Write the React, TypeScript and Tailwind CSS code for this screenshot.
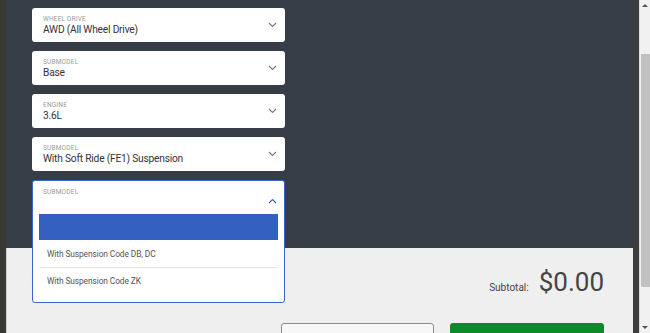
import React from 'react';

type Field = {
  label: string;
  value: string;
};

const fields: Field[] = [
  { label: 'Wheel Drive', value: 'AWD (All Wheel Drive)' },
  { label: 'Submodel', value: 'Base' },
  { label: 'Engine', value: '3.6L' },
  { label: 'Submodel', value: 'With Soft Ride (FE1) Suspension' },
];

const options = ['With Suspension Code DB, DC', 'With Suspension Code ZK'];

const Chevron: React.FC<{ up?: boolean }> = ({ up }) => (
  <svg width="9" height="6" viewBox="0 0 9 6" className={up ? 'text-[#3461c1]' : 'text-[#777]'}>
    <path
      d={up ? 'M1 5 L4.5 1.5 L8 5' : 'M1 1 L4.5 4.5 L8 1'}
      fill="none"
      stroke="currentColor"
      strokeWidth="1.1"
    />
  </svg>
);

const SelectBox: React.FC<Field> = ({ label, value }) => (
  <div className="h-[34px] bg-white rounded-[3px] flex items-center pl-[11px] pr-[8px]">
    <div className="flex-1 flex flex-col pt-[1px]">
      <span className="text-[6.5px] leading-[8px] uppercase tracking-[0.2px] text-[#9a9a9a]">{label}</span>
      <span className="text-[10.2px] leading-[14px] tracking-[-0.2px] text-[#333]">{value}</span>
    </div>
    <Chevron />
  </div>
);

export default function App() {
  return (
    <div className="h-[333px] w-[650px] overflow-hidden flex font-['Roboto',sans-serif]">
      <div className="w-[6px] bg-[#3a3835]" />
      <div className="flex-1 flex flex-col overflow-hidden">
        <div className="h-[248px] shrink-0 bg-[#363d47] pt-[8px] pl-[26px]">
          <div className="w-[253px] flex flex-col gap-[9px]">
            {fields.map((f, i) => (
              <SelectBox key={i} label={f.label} value={f.value} />
            ))}
            <div className="relative h-[34px] z-10">
              <div className="absolute top-0 left-0 right-0 bg-white rounded-[3px] border border-[#3b66c9] h-[123px]">
                <div className="flex items-start pl-[10px] pr-[7px] pt-[7px] h-[33px]">
                  <span className="flex-1 text-[6.5px] leading-[8px] uppercase tracking-[0.2px] text-[#9a9a9a]">Submodel</span>
                  <div className="pt-[10px]">
                    <Chevron up />
                  </div>
                </div>
                <div className="mx-[6px] h-[26px] bg-[#3461c1]" />
                <div className="mx-[6px] flex flex-col pt-[1px]">
                  {options.map((o, i) => (
                    <div
                      key={i}
                      className={
                        'h-[27px] flex items-center pl-[8px] text-[8.4px] tracking-[-0.1px] text-[#555] ' +
                        (i === 0 ? 'border-b border-[#e6e6e6]' : '')
                      }
                    >
                      {o}
                    </div>
                  ))}
                </div>
              </div>
            </div>
          </div>
        </div>
        <div className="flex-1 bg-[#efefef] border-l border-[#cfcfcf] flex flex-col items-end pr-[29px]">
          <div className="flex items-baseline gap-[10px] mt-[19px]">
            <span className="text-[10px] text-[#444]">Subtotal:</span>
            <span className="text-[26px] leading-[30px] text-[#444]">$0.00</span>
          </div>
          <div className="flex gap-[16px] mt-[26px]">
            <div className="w-[153px] h-[24px] rounded-[3px] border border-[#8a8a8a] bg-[#f7f7f7]" />
            <div className="w-[154px] h-[24px] rounded-[3px] bg-[#0e8a26]" />
          </div>
        </div>
      </div>
      <div className="w-[6px] bg-[#3d3d3d]" />
      <div className="w-[11px] bg-[#f1f1f1] border-l border-[#dcdcdc] flex flex-col items-center">
        <div className="h-[11px] flex items-center justify-center">
          <div className="w-0 h-0 border-l-[3px] border-r-[3px] border-b-[3px] border-l-transparent border-r-transparent border-b-[#555]" />
        </div>
        <div className="mt-[43px] w-[9px] h-[233px] bg-[#c1c1c1]" />
        <div className="flex-1" />
        <div className="h-[11px] flex items-center justify-center">
          <div className="w-0 h-0 border-l-[3px] border-r-[3px] border-t-[3px] border-l-transparent border-r-transparent border-t-[#555]" />
        </div>
      </div>
    </div>
  );
}
